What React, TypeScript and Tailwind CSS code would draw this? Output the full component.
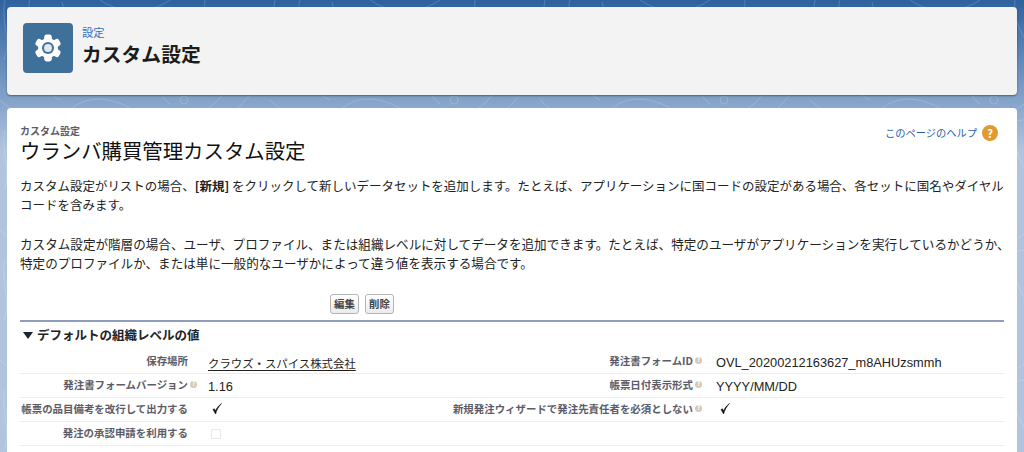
const font = { fontFamily: '"Noto Sans CJK JP", "Liberation Sans", sans-serif' };
const latin = { fontFamily: '"Liberation Sans", "Noto Sans CJK JP", sans-serif' };

function HelpDot() {
  return (
    <span className="ml-[2px] flex size-[7px] shrink-0 items-center justify-center rounded-full bg-[#d6cab4] text-[6px] font-bold leading-none text-white">
      ?
    </span>
  );
}

function Check({ checked }: { checked: boolean }) {
  if (!checked) return <span className="ml-[3px] mt-[3px] block size-[10px] rounded-[1px] border border-[#e8e8e8] bg-white" />;
  return (
    <svg width="14" height="14" viewBox="0 0 14 14" className="ml-[2px]">
      <path d="M3 7.5 L5.6 12 C6.6 8 8.6 4.5 11.5 1.5 C8.6 3.6 6.6 6.4 5.4 9 L4.4 6.8 Z" fill="#111" stroke="#111" strokeWidth="0.6" />
    </svg>
  );
}

type Row = { label: string; help?: boolean; value?: string; link?: boolean; check?: boolean };

const rows: [Row, Row | null][] = [
  [
    { label: "保存場所", value: "クラウズ・スパイス株式会社", link: true },
    { label: "発注書フォームID", help: true, value: "OVL_20200212163627_m8AHUzsmmh" },
  ],
  [
    { label: "発注書フォームバージョン", help: true, value: "1.16" },
    { label: "帳票日付表示形式", help: true, value: "YYYY/MM/DD" },
  ],
  [
    { label: "帳票の品目備考を改行して出力する", check: true },
    { label: "新規発注ウィザードで発注先責任者を必須としない", help: true, check: true },
  ],
  [{ label: "発注の承認申請を利用する", check: false }, null],
];

function Cell({ row, labelWidth, valueWidth }: { row: Row | null; labelWidth: string; valueWidth: string }) {
  if (!row) return <div className={labelWidth} />;
  return (
    <>
      <div className={`${labelWidth} flex shrink-0 items-center justify-end pr-[1px] text-[10.45px] font-bold text-[#5c5c68]`}>
        <span className="whitespace-nowrap">{row.label}</span>
        {row.help ? <HelpDot /> : <span className="w-[9px]" />}
      </div>
      <div className={`${valueWidth} shrink-0 text-[#222]`}>
        {row.check !== undefined ? (
          <Check checked={row.check} />
        ) : row.link ? (
          <span className="text-[11.4px] underline underline-offset-2">{row.value}</span>
        ) : (
          <span style={latin} className="text-[12.8px]">
            {row.value}
          </span>
        )}
      </div>
    </>
  );
}

export default function App() {
  return (
    <div
      style={font}
      className="relative h-[452px] w-[1024px] overflow-hidden bg-gradient-to-b from-[#2d629f] to-[#b0c4de] to-[150px] p-[7px] pb-0"
    >
      <svg className="absolute inset-x-0 top-0" width="1024" height="452" fill="none">
        <defs>
          <pattern id="topo" width="270" height="130" patternUnits="userSpaceOnUse">
            <g stroke="#ffffff" strokeOpacity="0.17">
              <path d="M5 0 C0 20 12 40 4 60 M30 0 C25 12 40 25 32 40 C20 60 40 90 60 100 M70 110 C90 92 115 100 130 108" />
              <path d="M62 2 C70 30 60 40 80 50 C110 60 130 30 160 50 C165 70 150 90 170 104 M180 100 a4 4 0 1 0 8 0 a4 4 0 1 0 -8 0" />
              <path d="M205 0 C200 40 240 50 225 90 C220 100 212 106 205 110 M245 90 C255 70 262 50 268 35 M238 108 L262 82" />
              <path d="M100 0 C120 14 150 14 170 0 M190 130 C210 115 240 115 260 130 M0 100 C10 110 20 112 30 130" />
            </g>
          </pattern>
        </defs>
        <rect width="1024" height="452" fill="url(#topo)" />
      </svg>

      <header className="relative flex h-[88px] items-start rounded-[4px] bg-[#f3f3f3] pl-[16px] pt-[16px] shadow-[0_1px_2px_rgba(0,0,0,0.4)]">
        <div className="flex size-[50px] items-center justify-center rounded-[4px] bg-[#3e7099]">
          <svg width="30" height="30" viewBox="0 0 30 30">
            <g fill="#fff">
              <circle cx="15" cy="15" r="10" />
              <rect x="11.2" y="1.6" width="7.6" height="26.8" rx="2.4" />
              <rect x="11.2" y="1.6" width="7.6" height="26.8" rx="2.4" transform="rotate(60 15 15)" />
              <rect x="11.2" y="1.6" width="7.6" height="26.8" rx="2.4" transform="rotate(120 15 15)" />
            </g>
            <circle cx="15" cy="15" r="6" fill="#3e7099" />
            <circle cx="15" cy="15" r="4" fill="#dfe8f0" />
          </svg>
        </div>
        <div className="ml-[9px] mt-[2px]">
          <div className="text-[11.3px] leading-[14px] text-[#2f72c4]">設定</div>
          <h1 className="mt-[1px] text-[19.8px] font-bold leading-[28px] text-[#1c1c1c]">カスタム設定</h1>
        </div>
      </header>

      <main className="relative mt-[13px] h-[400px] rounded-[4px] bg-white px-[13px] pt-[17px]">
        <div className="flex items-start justify-between">
          <div>
            <div className="text-[10px] font-bold leading-[11px] text-[#5c5c68]">カスタム設定</div>
            <h2 className="mt-[1px] text-[20.4px] leading-[26px] text-[#111]">ウランバ購買管理カスタム設定</h2>
          </div>
          <div className="mr-[6px] flex items-center gap-[5px]">
            <span className="text-[10.25px] text-[#1f62ab]">このページのヘルプ</span>
            <span className="flex size-[16px] items-center justify-center rounded-full bg-[#e19a30] text-[11px] font-bold text-white">?</span>
          </div>
        </div>

        <p className="mt-[14px] whitespace-nowrap text-[12.49px] leading-[19px] text-[#222]">
          カスタム設定がリストの場合、<b>[新規]</b> をクリックして新しいデータセットを追加します。たとえば、アプリケーションに国コードの設定がある場合、各セットに国名やダイヤル
          <br />
          コードを含みます。
        </p>
        <p className="mt-[19px] whitespace-nowrap text-[12.58px] leading-[19px] text-[#222]">
          カスタム設定が階層の場合、ユーザ、プロファイル、または組織レベルに対してデータを追加できます。たとえば、特定のユーザがアプリケーションを実行しているかどうか、
          <br />
          特定のプロファイルか、または単に一般的なユーザかによって違う値を表示する場合です。
        </p>

        <div className="ml-[310px] mt-[22px] flex gap-[6px]">
          {["編集", "削除"].map((t) => (
            <button
              key={t}
              className="h-[20px] w-[29px] rounded-[3px] border border-[#b5b5b5] bg-gradient-to-b from-white to-[#ececec] text-[10.4px] font-bold leading-none text-[#444]"
            >
              {t}
            </button>
          ))}
        </div>

        <section className="mt-[6px] border-t-2 border-[#8e9dbd]">
          <h3 className="flex h-[28px] items-center pb-[2px] text-[12.5px] font-bold text-[#222]">
            <span className="ml-[3px] mr-[4px] inline-block border-x-[5px] border-t-[7px] border-x-transparent border-t-[#1c2536]" />
            デフォルトの組織レベルの値
          </h3>
          {rows.map(([left, right], i) => (
            <div key={i} className="flex h-[24px] items-center border-b border-[#ececec] pb-[2px]">
              <Cell row={left} labelWidth="w-[178px]" valueWidth="w-[243px] pl-[10px]" />
              <Cell row={right} labelWidth="w-[262px]" valueWidth="w-[302px] pl-[13px]" />
            </div>
          ))}
        </section>
      </main>
    </div>
  );
}
